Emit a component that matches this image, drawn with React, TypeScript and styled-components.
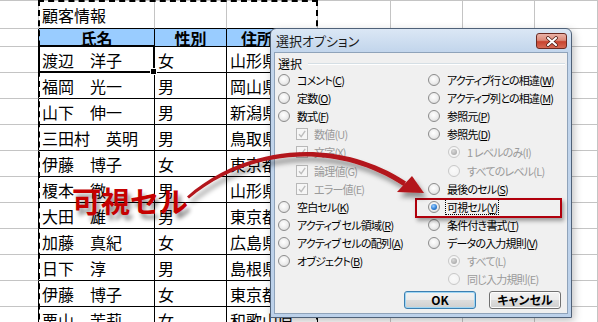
import styled, { createGlobalStyle } from 'styled-components';

const GlobalStyle = createGlobalStyle`
  html, body {
    margin: 0;
    padding: 0;
    background: #fff;
  }
  body {
    width: 598px;
    height: 322px;
    overflow: hidden;
    font-family: "Noto Sans CJK JP", sans-serif;
  }
`;

type Line = 'grid' | 'table';

const LINE_COLOR: Record<Line, string> = {
  grid: '#C4C4C4',
  table: '#000',
};

const people = [
  ['渡辺　洋子', '女', '山形県'],
  ['福岡　光一', '男', '岡山県'],
  ['山下　伸一', '男', '新潟県'],
  ['三田村　英明', '男', '鳥取県'],
  ['伊藤　博子', '女', '東京都'],
  ['榎本　徹', '男', '山形県'],
  ['大田　雄', '男', '東京都'],
  ['加藤　真紀', '女', '広島県'],
  ['日下　淳', '男', '島根県'],
  ['伊藤　博子', '女', '東京都'],
  ['栗山　茉莉', '女', '和歌山県'],
];

type Opt = {
  label: string;
  key?: string;
  kind?: 'radio' | 'check' | 'sub';
  checked?: boolean;
  disabled?: boolean;
  focus?: boolean;
};

// 左列
const leftOptions: Opt[] = [
  { label: 'コメント', key: 'C' },
  { label: '定数', key: 'O' },
  { label: '数式', key: 'F' },
  { label: '数値', key: 'U', kind: 'check', checked: true, disabled: true },
  { label: '文字', key: 'X', kind: 'check', checked: true, disabled: true },
  { label: '論理値', key: 'G', kind: 'check', checked: true, disabled: true },
  { label: 'エラー値', key: 'E', kind: 'check', checked: true, disabled: true },
  { label: '空白セル', key: 'K' },
  { label: 'アクティブ セル領域', key: 'R' },
  { label: 'アクティブ セルの配列', key: 'A' },
  { label: 'オブジェクト', key: 'B' },
];

// 右列
const rightOptions: Opt[] = [
  { label: 'アクティブ行との相違', key: 'W' },
  { label: 'アクティブ列との相違', key: 'M' },
  { label: '参照元', key: 'P' },
  { label: '参照先', key: 'D' },
  { label: '1 レベルのみ', key: 'I', kind: 'sub', checked: true, disabled: true },
  { label: 'すべてのレベル', key: 'L', kind: 'sub', disabled: true },
  { label: '最後のセル', key: 'S' },
  { label: '可視セル', key: 'Y', checked: true, focus: true },
  { label: '条件付き書式', key: 'T' },
  { label: 'データの入力規則', key: 'V' },
  { label: 'すべて', key: 'L', kind: 'sub', checked: true, disabled: true },
  { label: '同じ入力規則', key: 'E', kind: 'sub', disabled: true },
];

const OptionItem = ({ opt }: { opt: Opt }) => {
  const kind = opt.kind ?? 'radio';
  return (
    <SOption $indent={kind === 'check' ? 18 : kind === 'sub' ? 20 : 0} $gap={kind === 'check' ? 5 : 6}>
      {kind === 'check' ? (
        <SCheck $disabled={opt.disabled}>
          {opt.checked && (
            <svg width="10" height="10" viewBox="0 0 10 10">
              <path d="M2 5.2 L4.2 7.6 L8.2 1.8" fill="none" stroke="#BDBDBD" strokeWidth="1.4" />
            </svg>
          )}
        </SCheck>
      ) : (
        <SRadio $checked={opt.checked} $disabled={opt.disabled} />
      )}
      <SLabel $disabled={opt.disabled} $focus={opt.focus}>
        {opt.label}(
        {opt.disabled ? opt.key : <u>{opt.key}</u>})
      </SLabel>
    </SOption>
  );
};

export default function App() {
  const blanks = () =>
    [0, 1, 2, 3].map((i) => <SCell key={`b${i}`} $right="grid" $bottom="grid" />);

  return (
    <SPage>
      <GlobalStyle />
      <SSheet>
        {/* 1行目 */}
        <SCell $right="grid" $bottom="grid" />
        <SCell $right="grid" $bottom="table">
          顧客情報
        </SCell>
        <SCell $right="grid" $bottom="table" />
        <SCell $right="grid" $bottom="table" />
        {blanks()}

        {/* 見出し */}
        <SCell $right="table" $bottom="grid" />
        <SCell $right="table" $bottom="table" $head $center>
          氏名
        </SCell>
        <SCell $right="table" $bottom="table" $head $center>
          性別
        </SCell>
        <SCell $right="table" $bottom="table" $head $indent={14}>
          住所
        </SCell>
        {blanks()}

        {people.map(([name, sex, pref], i) => [
          <SCell key={`a${i}`} $right="table" $bottom="grid" />,
          <SCell key={`n${i}`} $right="table" $bottom="table">
            {name}
          </SCell>,
          <SCell key={`s${i}`} $right="table" $bottom="table">
            {sex}
          </SCell>,
          <SCell key={`p${i}`} $right="table" $bottom="table">
            {pref}
          </SCell>,
          ...[0, 1, 2, 3].map((j) => <SCell key={`e${i}-${j}`} $right="grid" $bottom="grid" />),
        ])}
      </SSheet>

      <SAnts />
      <SActiveCell>
        <SFillHandle />
      </SActiveCell>

      <SDialog>
        <STitleBar>
          <STitle>選択オプション</STitle>
          <SCloseButton>
            <svg width="14" height="11" viewBox="0 0 14 11">
              <path d="M3 2 L11 9 M11 2 L3 9" stroke="#4A1A14" strokeWidth="3.6" strokeLinecap="round" />
              <path d="M3 2 L11 9 M11 2 L3 9" stroke="#fff" strokeWidth="2.2" strokeLinecap="round" />
            </svg>
          </SCloseButton>
        </STitleBar>
        <SClient>
          <SGroupHeader>
            <SGroupLabel>選択</SGroupLabel>
            <SGroupRule />
          </SGroupHeader>
          <SOptionGrid>
            <SOptionColumn>
              {leftOptions.map((opt, i) => (
                <OptionItem key={i} opt={opt} />
              ))}
            </SOptionColumn>
            <SOptionColumn>
              {rightOptions.map((opt, i) => (
                <OptionItem key={i} opt={opt} />
              ))}
            </SOptionColumn>
          </SOptionGrid>
          <SButtonRow>
            <SButton $default>OK</SButton>
            <SButton>キャンセル</SButton>
          </SButtonRow>
        </SClient>
      </SDialog>

      <SHighlight />
      <SArrow width="598" height="322" viewBox="0 0 598 322">
        <defs>
          <filter id="arrowShadow" x="-10%" y="-30%" width="130%" height="180%">
            <feDropShadow dx="3" dy="5" stdDeviation="2.4" floodColor="#000" floodOpacity="0.4" />
          </filter>
        </defs>
        <g filter="url(#arrowShadow)" fill="#B3141A">
          <path d="M187 196.5 C240 149 331 133 406 181.5 L403.5 186 C329 138 242 153.5 189 198.5 Z" />
          <polygon points="412,176 397,192 424,193" />
        </g>
      </SArrow>
      <SCallout>可視セル</SCallout>
    </SPage>
  );
}

const SPage = styled.div`
  position: relative;
  width: 598px;
  height: 322px;
  overflow: hidden;
`;

const SSheet = styled.div`
  display: grid;
  grid-template-columns: 39px 116px 72px 91px 73px 72px 72px 63px;
  grid-template-rows: 28px 18px repeat(11, 26px);
  border-top: 1px solid #c4c4c4;
  font-family: "Noto Sans CJK JP", sans-serif;
  font-size: 16px;
  color: #000;
`;

const SCell = styled.div<{ $right: Line; $bottom: Line; $head?: boolean; $center?: boolean; $indent?: number }>`
  box-sizing: border-box;
  display: flex;
  align-items: center;
  justify-content: ${(p) => (p.$center ? 'center' : 'flex-start')};
  padding-left: ${(p) => (p.$center ? 0 : p.$indent ?? 3)}px;
  border-right: 1px solid ${(p) => LINE_COLOR[p.$right]};
  border-bottom: 1px solid ${(p) => LINE_COLOR[p.$bottom]};
  background: ${(p) => (p.$head ? '#99ccff' : '#fff')};
  font-weight: ${(p) => (p.$head ? 700 : 400)};
  line-height: 1;
  white-space: nowrap;
  overflow: hidden;
`;

const SAnts = styled.div`
  position: absolute;
  left: 38px;
  top: 0;
  width: 280px;
  height: 360px;
  box-sizing: border-box;
  border: 2px dashed #000;
`;

const SActiveCell = styled.div`
  position: absolute;
  left: 38px;
  top: 45px;
  width: 117px;
  height: 28px;
  box-sizing: border-box;
  border: 2px solid #000;
`;

const SFillHandle = styled.div`
  position: absolute;
  right: -4px;
  bottom: -4px;
  width: 5px;
  height: 5px;
  background: #000;
  border: 1px solid #fff;
`;

const SDialog = styled.div`
  position: absolute;
  left: 270px;
  top: 28px;
  width: 302px;
  height: 290px;
  box-sizing: border-box;
  display: flex;
  flex-direction: column;
  padding: 0 3px 3px;
  border: 1px solid #4f6178;
  border-radius: 6px 6px 0 0;
  background: linear-gradient(180deg, #dbe7f5 0px, #c3d6ec 22px, #bcd1ea 100%);
  box-shadow: 2px 3px 8px rgba(0, 0, 0, 0.25);
  font-family: "Noto Sans CJK JP", sans-serif;
  font-feature-settings: "palt" 1;
`;

const STitleBar = styled.div`
  height: 23px;
  display: flex;
  align-items: center;
  flex-shrink: 0;
`;

const STitle = styled.div`
  padding-left: 2px;
  font-size: 13px;
  color: #1a1a1a;
  line-height: 1;
`;

const SCloseButton = styled.div`
  margin-left: auto;
  margin-right: 1px;
  align-self: flex-start;
  margin-top: 4px;
  width: 31px;
  height: 16px;
  box-sizing: border-box;
  display: flex;
  align-items: center;
  justify-content: center;
  border: 1px solid #6b2a22;
  border-radius: 3px;
  background: linear-gradient(180deg, #eab3a8 0%, #dc8a79 45%, #c8432f 55%, #d66a55 100%);
`;

const SClient = styled.div`
  flex: 1;
  display: flex;
  flex-direction: column;
  background: #f0f0f0;
  border: 1px solid #8fa3ba;
  padding: 4px 0 4px 3px;
`;

const SGroupHeader = styled.div`
  height: 14px;
  display: flex;
  align-items: center;
  gap: 6px;
`;

const SGroupLabel = styled.div`
  font-size: 12px;
  line-height: 1;
  color: #000;
`;

const SGroupRule = styled.div`
  flex: 1;
  margin-right: 2px;
  height: 1px;
  background: #d5dfe5;
  border-bottom: 1px solid #fff;
`;

const SOptionGrid = styled.div`
  display: grid;
  grid-template-columns: 150px 1fr;
`;

const SOptionColumn = styled.div`
  display: grid;
  grid-auto-rows: 18.1px;
`;

const SOption = styled.div<{ $indent: number; $gap: number }>`
  display: flex;
  align-items: center;
  gap: ${(p) => p.$gap}px;
  padding-left: ${(p) => p.$indent}px;
  white-space: nowrap;
`;

const SRadio = styled.span<{ $checked?: boolean; $disabled?: boolean }>`
  width: 12px;
  height: 12px;
  flex-shrink: 0;
  box-sizing: border-box;
  border-radius: 50%;
  display: flex;
  align-items: center;
  justify-content: center;
  border: 1px solid ${(p) => (p.$disabled ? '#c8c8c8' : '#8c8c8c')};
  background: ${(p) =>
    p.$disabled
      ? 'radial-gradient(circle at 45% 40%, #fafafa 0%, #f0f0f0 100%)'
      : 'radial-gradient(circle at 45% 40%, #ffffff 0%, #eeeeee 50%, #cfcfcf 100%)'};

  &::after {
    content: '';
    display: ${(p) => (p.$checked ? 'block' : 'none')};
    width: 6px;
    height: 6px;
    border-radius: 50%;
    background: ${(p) =>
      p.$disabled
        ? 'radial-gradient(circle at 40% 35%, #d8d8d8 0%, #9e9e9e 100%)'
        : 'radial-gradient(circle at 40% 35%, #9fd0ff 0%, #2f7fd6 55%, #174f94 100%)'};
  }
`;

const SCheck = styled.span<{ $disabled?: boolean }>`
  width: 12px;
  height: 12px;
  flex-shrink: 0;
  box-sizing: border-box;
  display: flex;
  align-items: center;
  justify-content: center;
  border: 1px solid ${(p) => (p.$disabled ? '#b8b8b8' : '#8c8c8c')};
  background: #f6f6f6;
`;

const SLabel = styled.span<{ $disabled?: boolean; $focus?: boolean }>`
  font-size: 11px;
  line-height: 14px;
  letter-spacing: -0.8px;
  color: ${(p) => (p.$disabled ? '#9a9a9a' : '#000')};
  outline: ${(p) => (p.$focus ? '1px dotted #000' : 'none')};
  outline-offset: 0;
  padding: 0 1px;

  u {
    text-underline-offset: 1px;
  }
`;

const SButtonRow = styled.div`
  margin-top: auto;
  display: flex;
  justify-content: flex-end;
  gap: 13px;
  padding-right: 6px;
`;

const SButton = styled.div<{ $default?: boolean }>`
  width: 72px;
  height: 18px;
  box-sizing: border-box;
  display: flex;
  align-items: center;
  justify-content: center;
  border: 1px solid ${(p) => (p.$default ? '#3c7fb1' : '#707070')};
  border-radius: 3px;
  background: linear-gradient(180deg, #f2f2f2 0%, #ebebeb 48%, #dddddd 52%, #cfcfcf 100%);
  box-shadow: ${(p) => (p.$default ? 'inset 0 0 0 1px #9fd6f4' : 'inset 0 0 0 1px #fcfcfc')};
  font-size: 12px;
  font-weight: 700;
  line-height: 1;
  color: #000;
`;

const SHighlight = styled.div`
  position: absolute;
  left: 415px;
  top: 198px;
  width: 147px;
  height: 20px;
  box-sizing: border-box;
  border: 2px solid #b0000c;
  box-shadow: 2px 3px 4px rgba(0, 0, 0, 0.35);
`;

const SArrow = styled.svg`
  position: absolute;
  left: 0;
  top: 0;
  pointer-events: none;
`;

const SCallout = styled.div`
  position: absolute;
  left: 72px;
  top: 185px;
  font-family: "Noto Sans CJK JP", sans-serif;
  font-size: 29px;
  font-weight: 700;
  line-height: 30px;
  color: #c60000;
  text-shadow: 3px 5px 4px rgba(0, 0, 0, 0.45);
  white-space: nowrap;
`;
